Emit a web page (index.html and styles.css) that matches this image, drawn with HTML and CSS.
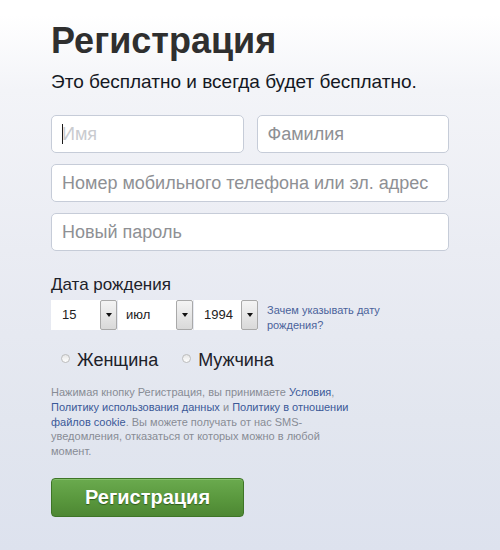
FILE: index.html
```html
<!DOCTYPE html>
<html lang="ru">
<head>
    <meta charset="UTF-8">
    <title>Регистрация</title>
    <link rel="stylesheet" href="styles.css">
</head>
<body>
    <div class="page">
        <h1 class="title">Регистрация</h1>
        <div class="subtitle">Это бесплатно и всегда будет бесплатно.</div>

        <div class="fields">
            <div class="row">
                <div class="field">
                    <input class="text-input input-focus" type="text" placeholder="Имя">
                    <span class="caret"></span>
                </div>
                <div class="field">
                    <input class="text-input" type="text" placeholder="Фамилия">
                </div>
            </div>
            <input class="text-input" type="text" placeholder="Номер мобильного телефона или эл. адрес">
            <input class="text-input" type="password" placeholder="Новый пароль">
        </div>

        <div class="birthday-label">Дата рождения</div>
        <div class="birthday">
            <div class="select sel-day">
                <span class="value">15</span>
                <span class="arrow"><i></i></span>
            </div>
            <div class="select sel-month">
                <span class="value">июл</span>
                <span class="arrow"><i></i></span>
            </div>
            <div class="select sel-year">
                <span class="value">1994</span>
                <span class="arrow"><i></i></span>
            </div>
            <a class="why" href="#">Зачем указывать дату рождения?</a>
        </div>

        <div class="gender">
            <label class="radio"><span class="dot"></span>Женщина</label>
            <label class="radio"><span class="dot"></span>Мужчина</label>
        </div>

        <p class="legal">
            Нажимая кнопку Регистрация, вы принимаете <a href="#">Условия</a>,
            <a href="#">Политику использования данных</a> и <a href="#">Политику в отношении файлов cookie</a>.
            Вы можете получать от нас SMS-уведомления, отказаться от которых можно в любой момент.
        </p>

        <button class="submit" type="button">Регистрация</button>
    </div>
</body>
</html>
```

FILE: styles.css
```css
/*page*/
body{
    margin: 0;
    min-height: 550px;
    font-family: "Liberation Sans", Arial, sans-serif;
    background: linear-gradient(to bottom, #fff 0, #fff 15px, #f3f4f8 90px, #eaecf3 250px, #e2e6ef 420px, #dde2ee 550px);
}
.page{
    padding: 19px 0 0 51px;
    width: 398px;
}
.title{
    margin: 0;
    font-size: 36px;
    line-height: 43px;
    font-weight: bold;
    color: #2f2f2f;
}
.subtitle{
    margin-top: 8px;
    font-size: 19px;
    line-height: 23px;
    color: #141823;
}
/*inputs*/
.fields{
    display: flex;
    flex-direction: column;
    gap: 11px;
    margin-top: 22px;
}
.row{
    display: flex;
    gap: 13px;
}
.field{
    position: relative;
    flex: 1;
    display: flex;
}
.text-input{
    box-sizing: border-box;
    width: 100%;
    height: 38px;
    padding: 0 10px;
    border: 1px solid #c6ccd8;
    border-radius: 5px;
    background-color: #fff;
    font-family: "Liberation Sans", Arial, sans-serif;
    font-size: 18px;
    color: #141823;
    outline: none;
}
.text-input::placeholder{
    color: #8e9094;
}
.input-focus::placeholder{
    color: #c9cbcf;
}
.caret{
    position: absolute;
    left: 11px;
    top: 9px;
    width: 1px;
    height: 20px;
    background-color: #1a1a1a;
}
/*birthday*/
.birthday-label{
    margin-top: 24px;
    font-size: 17px;
    line-height: 20px;
    color: #1d2129;
}
.birthday{
    display: flex;
    align-items: flex-start;
    margin-top: 5px;
}
.select{
    display: flex;
    height: 30px;
    margin-right: 1px;
    background-color: #fff;
}
.value{
    box-sizing: border-box;
    padding-left: 11px;
    font-size: 13px;
    line-height: 30px;
    color: #222;
}
.sel-day .value{ width: 49px; }
.sel-month .value{ width: 58px; padding-left: 8px; }
.sel-year .value{ width: 47px; padding-left: 10px; }
.arrow{
    box-sizing: border-box;
    display: flex;
    align-items: center;
    justify-content: center;
    width: 17px;
    height: 30px;
    border: 1px solid #a9a9a9;
    border-radius: 2px;
    background: linear-gradient(to bottom, #f4f4f4, #d9d9d9);
}
.arrow i{
    width: 0;
    height: 0;
    border-left: 3px solid transparent;
    border-right: 3px solid transparent;
    border-top: 4px solid #111;
}
.sel-year{
    margin-right: 9px;
}
.why{
    width: 125px;
    padding-top: 3px;
    font-size: 11px;
    line-height: 15px;
    color: #4b639b;
    text-decoration: none;
}
/*gender*/
.gender{
    display: flex;
    gap: 24px;
    margin-top: 16px;
    padding-left: 10px;
}
.radio{
    display: flex;
    align-items: center;
    font-size: 18px;
    line-height: 22px;
    color: #1d2129;
}
.dot{
    box-sizing: border-box;
    width: 9px;
    height: 9px;
    margin: -4px 7px 0 0;
    border: 1px solid #bcbcbc;
    border-radius: 50%;
    background: linear-gradient(to bottom, #e6e6e6, #fff);
}
/*legal*/
.legal{
    width: 305px;
    margin: 14px 0 0;
    font-size: 11px;
    line-height: 14.8px;
    color: #888c95;
}
.legal a{
    color: #3b5998;
    text-decoration: none;
}
/*button*/
.submit{
    display: block;
    width: 193px;
    height: 39px;
    margin-top: 19px;
    border: 1px solid #3e7527;
    border-radius: 4px;
    background: linear-gradient(to bottom, #6aaa4e, #58963c 60%, #4d8733);
    box-shadow: inset 0 1px 0 #85bf6b;
    font-family: "Liberation Sans", Arial, sans-serif;
    font-size: 20px;
    font-weight: bold;
    color: #fff;
    text-shadow: 0 1px 1px #2e5a1c;
}
```
